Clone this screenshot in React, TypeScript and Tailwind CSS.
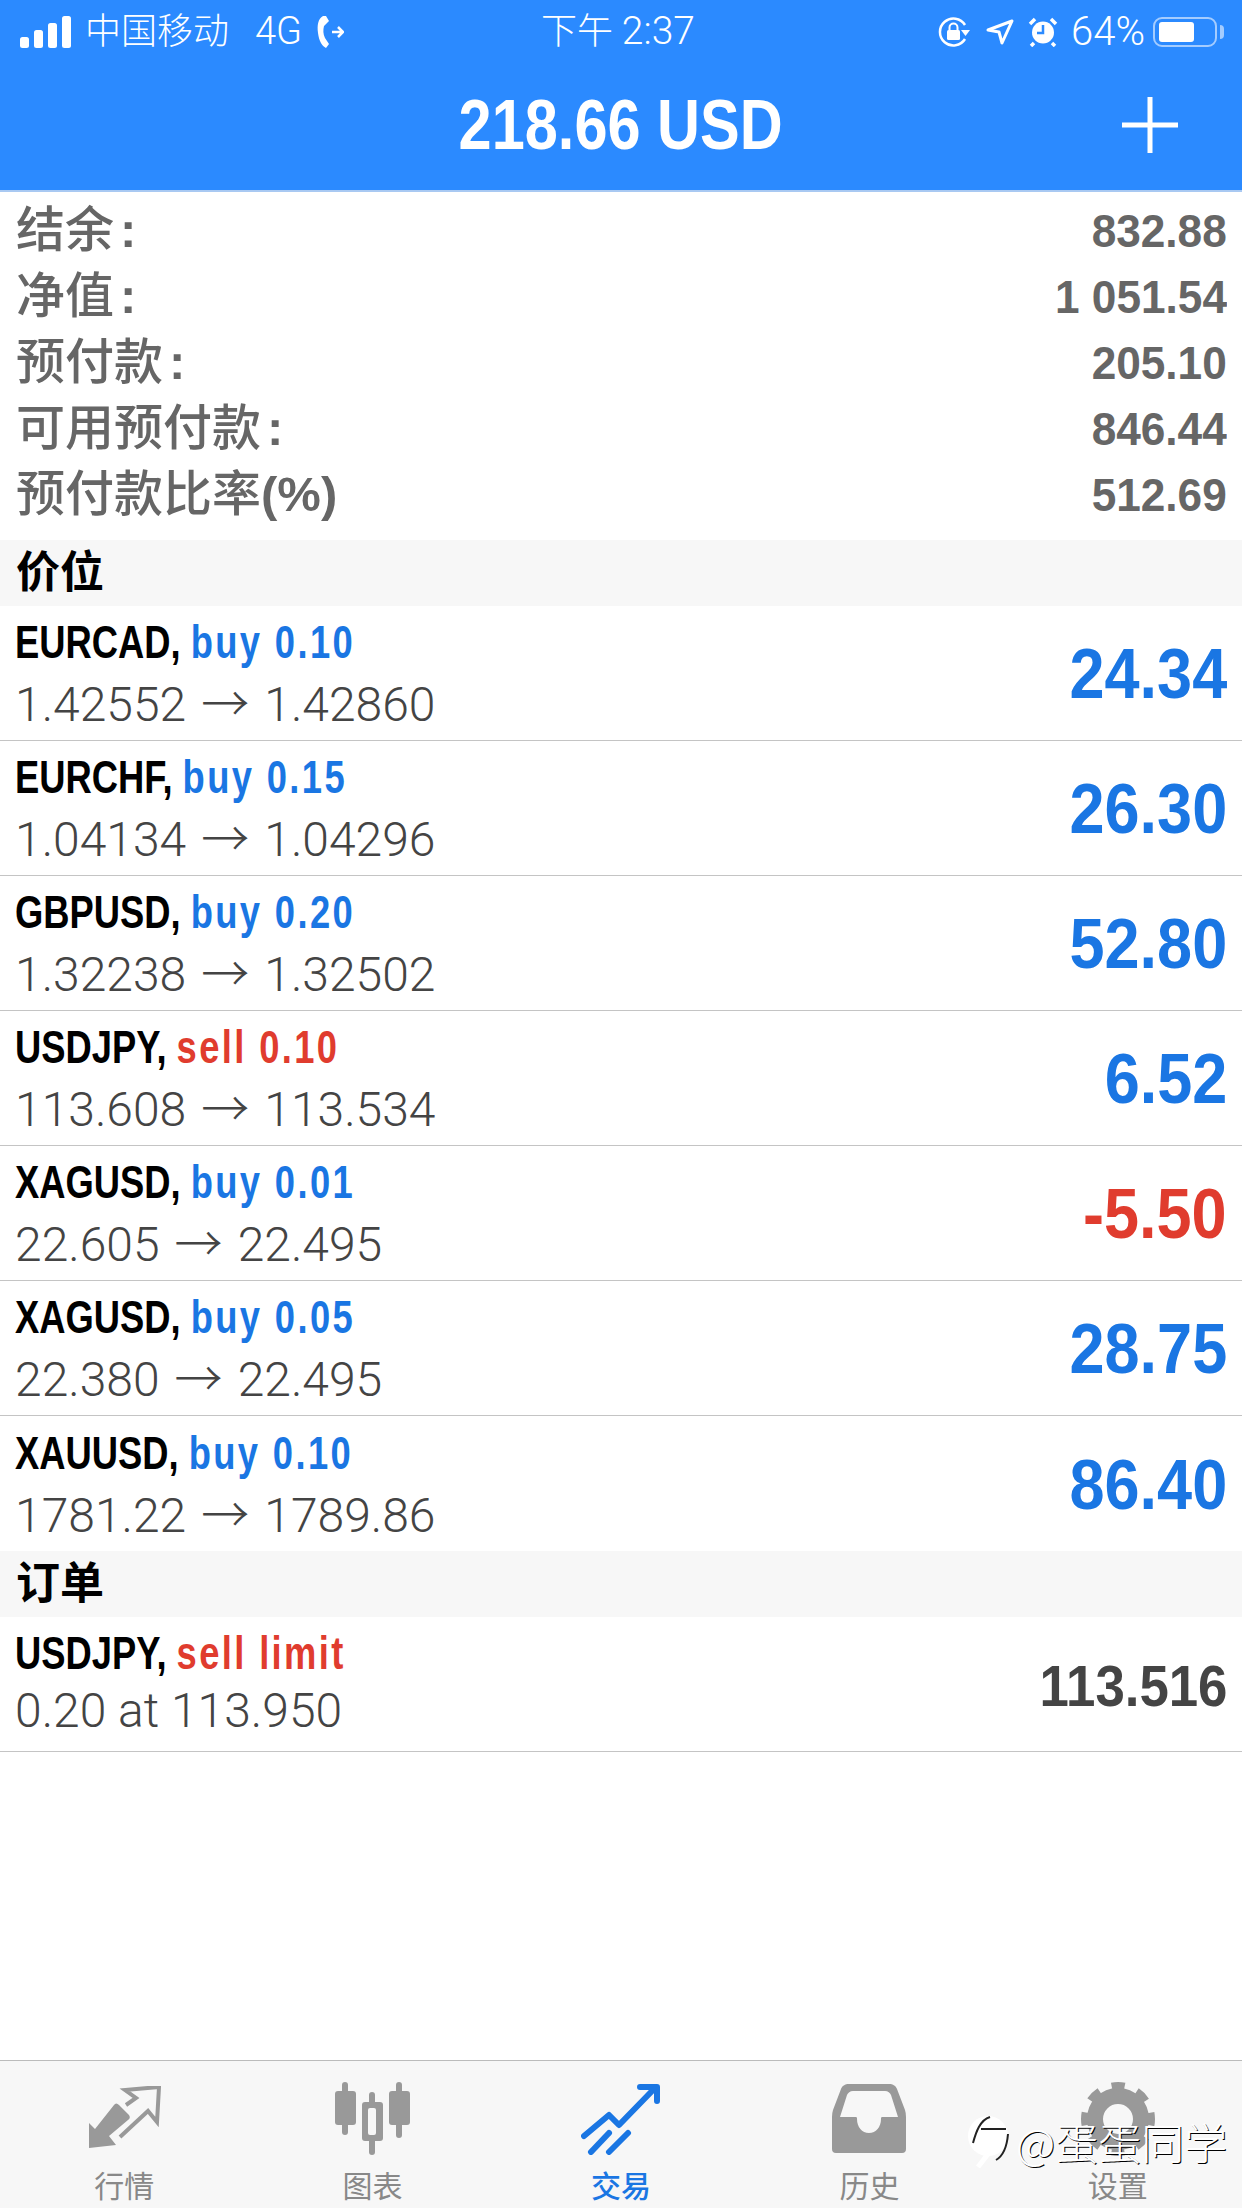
import React from "react";

const sans = "font-['Liberation_Sans','Noto_Sans_CJK_SC',sans-serif]";
const light = "font-['Roboto','Noto_Sans_CJK_SC',sans-serif] font-light";

interface Position {
  symbol: string;
  side: string;
  from: string;
  to: string;
  profit: string;
  loss?: boolean;
}

const summary = [
  ["结余", ":", "832.88"],
  ["净值", ":", "1 051.54"],
  ["预付款", ":", "205.10"],
  ["可用预付款", ":", "846.44"],
  ["预付款比率", "(%)", "512.69"],
];

const positions: Position[] = [
  { symbol: "EURCAD,", side: "buy 0.10", from: "1.42552", to: "1.42860", profit: "24.34" },
  { symbol: "EURCHF,", side: "buy 0.15", from: "1.04134", to: "1.04296", profit: "26.30" },
  { symbol: "GBPUSD,", side: "buy 0.20", from: "1.32238", to: "1.32502", profit: "52.80" },
  { symbol: "USDJPY,", side: "sell 0.10", from: "113.608", to: "113.534", profit: "6.52" },
  { symbol: "XAGUSD,", side: "buy 0.01", from: "22.605", to: "22.495", profit: "-5.50", loss: true },
  { symbol: "XAGUSD,", side: "buy 0.05", from: "22.380", to: "22.495", profit: "28.75" },
  { symbol: "XAUUSD,", side: "buy 0.10", from: "1781.22", to: "1789.86", profit: "86.40" },
];

function SectionHeader({ title }: { title: string }) {
  return (
    <div className="flex h-[66px] items-center bg-[#f7f7f7] pl-4 text-[44px] font-bold text-black">
      {title}
    </div>
  );
}

function TradeRow({ symbol, side, sideRed, sub, value, valueClass, last }: {
  symbol: string;
  side: string;
  sideRed: boolean;
  sub: React.ReactNode;
  value: string;
  valueClass: string;
  last?: boolean;
}) {
  return (
    <div className={`flex h-[135px] items-center justify-between pr-[15px] pl-[15px] ${last ? "" : "border-b border-[#c4c4c4]"}`}>
      <div className="flex flex-col pb-[4px]">
        <div className="h-[58px] origin-left scale-x-[.79] text-[46px] leading-[58px] font-bold whitespace-pre text-black">
          {symbol} <span className={`tracking-[3px] ${sideRed ? "text-[#e03c2e]" : "text-[#1a76e3]"}`}>{side}</span>
        </div>
        <div className={`${light} h-[58px] text-[48px] leading-[58px] whitespace-pre text-[#444]`}>{sub}</div>
      </div>
      <div className={`origin-right pt-[3px] font-bold ${valueClass}`}>{value}</div>
    </div>
  );
}

function PriceMove({ from, to }: { from: string; to: string }) {
  return (
    <>
      {from}
      <span className="mx-[15px] font-['Noto_Sans_CJK_SC'] text-[48px]">→</span>
      {to}
    </>
  );
}

function StatusBar() {
  return (
    <div className={`${light} flex h-[60px] items-center justify-between pt-[3px] pr-[25px] pl-[20px] text-[36px] text-white`}>
      <div className="flex w-[400px] items-center">
        <svg width="52" height="34" viewBox="0 0 52 34" fill="white">
          <rect x="0" y="22" width="9" height="11" rx="2.5" />
          <rect x="14" y="15" width="9" height="18" rx="2.5" />
          <rect x="28" y="8" width="9" height="25" rx="2.5" />
          <rect x="42" y="1" width="9" height="32" rx="2.5" />
        </svg>
        <span className="ml-[13px]">中国移动</span>
        <span className="ml-[26px] text-[38px]">4G</span>
        <svg className="ml-[14px]" width="28" height="34" viewBox="0 0 28 34" fill="none">
          <path d="M7 1C2 4 1 10 2 18C3 26 6 31 10 33L13 29L9 23C7 19 7 15 8 11L13 6L10 1Z" fill="white" />
          <path d="M16 17H27M22 12L27 17L22 22" stroke="white" strokeWidth="2.5" />
        </svg>
      </div>
      <div className="pr-[1px]">下午 <span className="text-[39px]">2:37</span></div>
      <div className="flex w-[400px] items-center justify-end">
        <svg width="32" height="30" viewBox="0 0 32 30" fill="none">
          <path d="M27 8A13.5 13.5 0 1 0 27 22" stroke="white" strokeWidth="2.5" />
          <path d="M23 13H32L27.5 19Z" fill="white" />
          <rect x="9" y="13" width="13" height="10" rx="1.5" fill="white" />
          <path d="M11.5 13V10.5A4 4 0 0 1 19.5 10.5V13" stroke="white" strokeWidth="2" />
        </svg>
        <svg className="ml-[16px]" width="28" height="26" viewBox="0 0 28 26" fill="none">
          <path d="M26 2L16 24L13 13L2 11Z" stroke="white" strokeWidth="3" strokeLinejoin="round" />
        </svg>
        <svg className="ml-[14px]" width="30" height="30" viewBox="0 0 30 30" fill="none">
          <circle cx="15" cy="15.5" r="11" fill="white" />
          <path d="M15 8V16H9" stroke="#2b8aff" strokeWidth="2.5" />
          <path d="M2 7L7 2M28 7L23 2M6 26L3 29M24 26L27 29" stroke="white" strokeWidth="3.5" />
        </svg>
        <span className="ml-[13px] text-[40px]">64%</span>
        <div className="relative ml-[8px] flex h-[30px] w-[64px] items-center rounded-[9px] border-2 border-[#a4ccff] px-[4px]">
          <div className="h-[20px] w-[35px] rounded-[3px] bg-white" />
          <div className="absolute top-[6px] right-[-9px] h-[14px] w-[4px] rounded-r-sm bg-[#a4ccff]" />
        </div>
      </div>
    </div>
  );
}

function TabIcon({ index, color }: { index: number; color: string }) {
  if (index === 0) {
    return (
      <svg width="74" height="66" viewBox="0 0 74 66" fill="none">
        <path d="M2 62L2 37L8 43L27 19Q29 16 32 19L42 29Q44 32 41 34L22 50L29 59Z" fill={color} />
        <path d="M39 19L49 12L38 4L72 1L70 36L61 25L33 51" stroke={color} strokeWidth="4" />
      </svg>
    );
  }
  if (index === 1) {
    return (
      <svg width="78" height="74" viewBox="0 0 78 74" fill={color}>
        <rect x="1" y="9" width="21" height="34" rx="3" />
        <rect x="8" y="0" width="6" height="53" rx="3" />
        <rect x="55" y="9" width="21" height="34" rx="3" />
        <rect x="62" y="0" width="6" height="56" rx="3" />
        <rect x="35" y="10" width="6" height="63" rx="3" />
        <rect x="28" y="20" width="21" height="39" rx="3" />
        <rect x="34" y="26" width="8" height="27" rx="2" fill="#f7f7f7" />
      </svg>
    );
  }
  if (index === 2) {
    return (
      <svg width="80" height="72" viewBox="0 0 80 72" fill="none" stroke={color} strokeWidth="6" strokeLinecap="round" strokeLinejoin="round">
        <path d="M3 53L28 32L38 42L72 7" />
        <path d="M59 4H76V18" />
        <path d="M10 69L28 50" />
        <path d="M28 69L47 50" />
      </svg>
    );
  }
  if (index === 3) {
    return (
      <svg width="76" height="70" viewBox="0 0 76 70" fill="none">
        <path fillRule="evenodd" clipRule="evenodd" d="M18 0H58C62 0 65 2 66 5L74 26Q75 29 75 33V65Q75 69 71 69H5Q1 69 1 65V33Q1 29 2 26L10 5C11 2 14 0 18 0ZM22 7C19 7 17 9 16 11L9 33H25C26 33 26 34 26 35C26 43 31 49 38 49C45 49 50 43 50 35C50 34 50 33 51 33H67L60 11C59 9 57 7 54 7Z" fill={color} />
      </svg>
    );
  }
  return (
    <svg width="76" height="76" viewBox="0 0 76 76" fill="none" stroke={color}>
      <circle cx="38" cy="38" r="23" strokeWidth="16" />
      <circle cx="38" cy="38" r="33.5" strokeWidth="7" strokeDasharray="13.15 13.15" strokeDashoffset="6.6" />
    </svg>
  );
}

const tabs = ["行情", "图表", "交易", "历史", "设置"];

export default function App() {
  return (
    <div className={`${sans} relative flex h-[2208px] w-[1242px] flex-col overflow-hidden bg-white`}>
      <header className="h-[192px] border-b-2 border-[#a9c9f2] bg-[#2b8aff]">
        <StatusBar />
        <div className="relative flex h-[130px] items-center justify-center">
          <span className="scale-x-[.85] text-[70px] font-bold text-white">218.66 USD</span>
          <svg className="absolute top-[37px] right-[64px]" width="56" height="56" viewBox="0 0 56 56" stroke="white" strokeWidth="5">
            <path d="M28 0V56M0 28H56" />
          </svg>
        </div>
      </header>

      <section className="flex h-[348px] flex-col pt-[6px] text-[#666]">
        {summary.map(([label, suffix, value]) => (
          <div key={label} className="flex h-[66px] items-center justify-between pr-[15px] pl-4">
            <span className="text-[49px] font-medium">
              {label}
              <span className={suffix === ":" ? "ml-[6px] font-bold" : "font-bold"}>{suffix}</span>
            </span>
            <span className="origin-right scale-x-[.94] text-[47px] font-bold">{value}</span>
          </div>
        ))}
      </section>

      <SectionHeader title="价位" />
      {positions.map((p, i) => (
        <TradeRow
          key={i}
          symbol={p.symbol}
          side={p.side}
          sideRed={p.side.startsWith("sell")}
          sub={<PriceMove from={p.from} to={p.to} />}
          value={p.profit}
          valueClass={`scale-x-[.9] text-[70px] ${p.loss ? "text-[#e03c2e]" : "text-[#1a76e3]"}`}
          last={i === positions.length - 1}
        />
      ))}
      <SectionHeader title="订单" />
      <TradeRow symbol="USDJPY," side="sell limit" sideRed sub="0.20 at 113.950" value="113.516" valueClass="scale-x-[.91] text-[58px] text-[#444]" />

      <footer className="mt-auto grid h-[148px] grid-cols-5 border-t border-[#bbb] bg-[#f7f7f7]">
        {tabs.map((t, i) => (
          <div key={t} className="flex flex-col items-center justify-end pb-[1px]">
            <div className="flex h-[80px] items-center"><TabIcon index={i} color={i === 2 ? "#1a76e3" : "#999"} /></div>
            <span className={`mt-[8px] text-[30px] leading-[40px] ${i === 2 ? "font-medium text-[#1a76e3]" : "text-[#888]"}`}>{t}</span>
          </div>
        ))}
      </footer>

      {/* watermark sits over the last tab */}
      <div className="absolute top-[2114px] left-[968px] flex items-center font-['Noto_Sans_CJK_SC'] text-[43px] leading-none font-light text-white [text-shadow:1px_1px_0_#000]">
        <svg width="42" height="54" viewBox="0 0 42 54" fill="none">
          <circle cx="20" cy="22" r="20" fill="white" />
          <path d="M20 40L10 53" stroke="white" strokeWidth="5" />
          <path d="M5 29C8 18 12 6 22 3M13 15H38" stroke="#222" strokeWidth="2" />
          <path d="M40 20C39 32 35 42 28 46" stroke="#222" strokeWidth="2" />
        </svg>
        <span className="ml-[6px]">@蛋蛋同学</span>
      </div>
    </div>
  );
}
